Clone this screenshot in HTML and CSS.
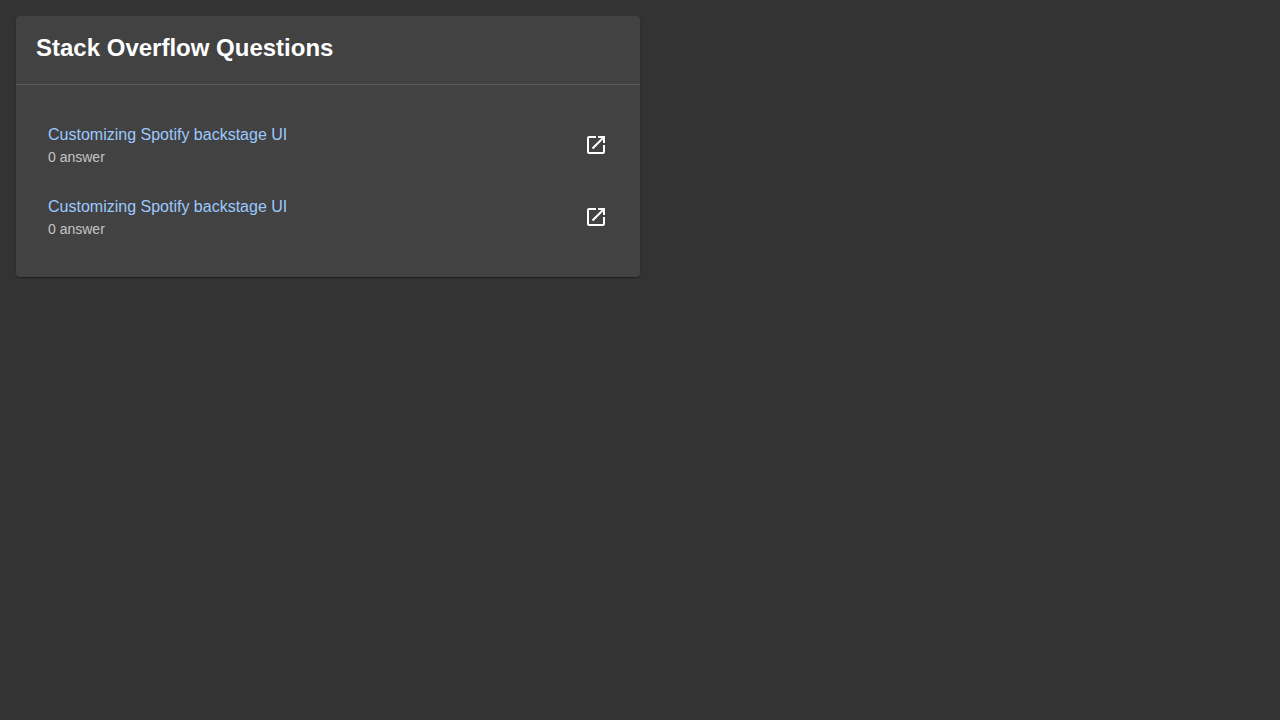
FILE: index.html
```html
<!DOCTYPE html>
<html lang="en">
<head>
<meta charset="utf-8">
<title>Stack Overflow Questions</title>
<link rel="stylesheet" href="styles.css">
</head>
<body>
<section class="card">
  <header class="card-header"><h2 class="card-title">Stack Overflow Questions</h2></header>
  <hr class="divider">
  <div class="card-content">
    <ul class="list">
      <li class="item">
        <div class="item-text">
          <a class="item-link">Customizing Spotify backstage UI</a>
          <p class="item-meta">0 answer</p>
        </div>
        <svg class="icon" viewBox="0 0 24 24" aria-hidden="true"><path d="M19 19H5V5h7V3H5c-1.11 0-2 .9-2 2v14c0 1.1.89 2 2 2h14c1.1 0 2-.9 2-2v-7h-2v7zM14 3v2h3.59l-9.83 9.83 1.41 1.41L19 6.41V10h2V3h-7z"/></svg>
      </li>
      <li class="item">
        <div class="item-text">
          <a class="item-link">Customizing Spotify backstage UI</a>
          <p class="item-meta">0 answer</p>
        </div>
        <svg class="icon" viewBox="0 0 24 24" aria-hidden="true"><path d="M19 19H5V5h7V3H5c-1.11 0-2 .9-2 2v14c0 1.1.89 2 2 2h14c1.1 0 2-.9 2-2v-7h-2v7zM14 3v2h3.59l-9.83 9.83 1.41 1.41L19 6.41V10h2V3h-7z"/></svg>
      </li>
    </ul>
  </div>
</section>
</body>
</html>
```
FILE: styles.css
```css
* { box-sizing: border-box; }
body {
  margin: 0;
  padding: 16px;
  background: #333;
  color: #fff;
  font-family: "Liberation Sans", Arial, sans-serif;
}
.card {
  width: 624px;
  background: #424242;
  border-radius: 4px;
  box-shadow: 0 2px 1px -1px rgba(0,0,0,.2), 0 1px 1px 0 rgba(0,0,0,.14), 0 1px 3px 0 rgba(0,0,0,.12);
}
.card-header { padding: 16px 16px 20px 20px; }
.card-title { margin: 0; font-size: 24px; line-height: 32px; font-weight: 700; }
.divider { height: 1px; margin: 0; border: 0; background: rgba(255,255,255,.12); }
.card-content { padding: 16px; }
.list { margin: 0; padding: 8px 0; list-style: none; }
.item { display: flex; align-items: center; justify-content: space-between; padding: 8px 16px; }
.item-text { margin: 6px 0; }
.item-link { display: block; font-size: 16px; line-height: 24px; color: #9cc9ff; }
.item-meta { margin: 0; font-size: 14px; line-height: 20px; color: rgba(255,255,255,.7); }
.icon { width: 24px; height: 24px; fill: #fff; }
```
